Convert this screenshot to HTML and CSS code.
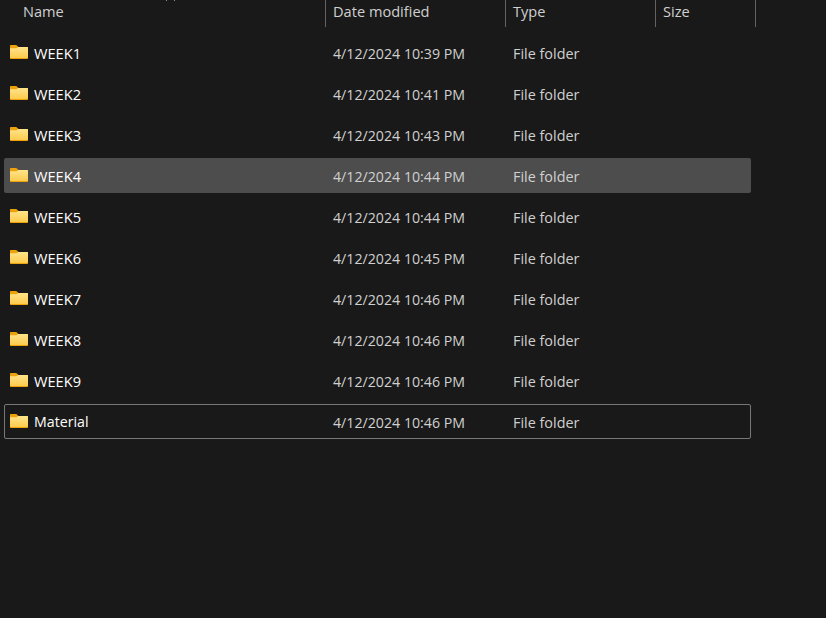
FILE: index.html
```html
<!DOCTYPE html>
<html lang="en">
<head>
<meta charset="utf-8">
<title>Folder</title>
<link rel="stylesheet" href="styles.css">
</head>
<body>
<svg class="defs" width="0" height="0" aria-hidden="true">
  <defs>
    <linearGradient id="fg" x1="0" y1="0" x2="0" y2="1">
      <stop offset="0" stop-color="#ffe48a"/>
      <stop offset="1" stop-color="#fccb4e"/>
    </linearGradient>
    <symbol id="folder" viewBox="0 0 18 14">
      <path d="M0 1C0 .4.4 0 1 0h4.8c.4 0 .7.1 1 .4L8.6 2H17c.6 0 1 .4 1 1V13c0 .6-.4 1-1 1H1c-.6 0-1-.4-1-1Z" fill="#eda20c"/>
      <path d="M0 3.3h6.4L8.3 2H17c.6 0 1 .4 1 1V12.6c0 .3-.3.5-.6.5H.6c-.3 0-.6-.2-.6-.5Z" fill="url(#fg)"/>
    </symbol>
  </defs>
</svg>
<main class="view">
  <div class="sort-mark"></div>
  <header class="head">
    <div class="hcell c-name">Name</div>
    <div class="hcell c-date">Date modified</div>
    <div class="hcell c-type">Type</div>
    <div class="hcell c-size">Size</div>
  </header>
  <ul class="list">
    <li class="row"><div class="c-name name"><svg class="ico"><use href="#folder"/></svg><span class="wk">WEEK1</span></div><div class="c-date">4/12/2024 10:39 PM</div><div class="c-type">File folder</div></li>
    <li class="row"><div class="c-name name"><svg class="ico"><use href="#folder"/></svg><span class="wk">WEEK2</span></div><div class="c-date">4/12/2024 10:41 PM</div><div class="c-type">File folder</div></li>
    <li class="row"><div class="c-name name"><svg class="ico"><use href="#folder"/></svg><span class="wk">WEEK3</span></div><div class="c-date">4/12/2024 10:43 PM</div><div class="c-type">File folder</div></li>
    <li class="row selected"><div class="c-name name"><svg class="ico"><use href="#folder"/></svg><span class="wk">WEEK4</span></div><div class="c-date">4/12/2024 10:44 PM</div><div class="c-type">File folder</div></li>
    <li class="row"><div class="c-name name"><svg class="ico"><use href="#folder"/></svg><span class="wk">WEEK5</span></div><div class="c-date">4/12/2024 10:44 PM</div><div class="c-type">File folder</div></li>
    <li class="row"><div class="c-name name"><svg class="ico"><use href="#folder"/></svg><span class="wk">WEEK6</span></div><div class="c-date">4/12/2024 10:45 PM</div><div class="c-type">File folder</div></li>
    <li class="row"><div class="c-name name"><svg class="ico"><use href="#folder"/></svg><span class="wk">WEEK7</span></div><div class="c-date">4/12/2024 10:46 PM</div><div class="c-type">File folder</div></li>
    <li class="row"><div class="c-name name"><svg class="ico"><use href="#folder"/></svg><span class="wk">WEEK8</span></div><div class="c-date">4/12/2024 10:46 PM</div><div class="c-type">File folder</div></li>
    <li class="row"><div class="c-name name"><svg class="ico"><use href="#folder"/></svg><span class="wk">WEEK9</span></div><div class="c-date">4/12/2024 10:46 PM</div><div class="c-type">File folder</div></li>
    <li class="row focused"><div class="c-name name"><svg class="ico"><use href="#folder"/></svg><span>Material</span></div><div class="c-date">4/12/2024 10:46 PM</div><div class="c-type">File folder</div></li>
  </ul>
</main>
</body>
</html>
```
FILE: styles.css
```css
html, body {
  margin: 0;
  height: 100%;
  background: #191919;
  overflow: hidden;
}
.defs { position: absolute; }
.view {
  font-family: "Open Sans", "Noto Sans", sans-serif;
  font-size: 14.2px;
  color: #fff;
  position: relative;
}
.sort-mark {
  position: absolute;
  left: 166px;
  top: 0;
  width: 7px;
  height: 1px;
  border-left: 1px solid #8a8a8a;
  border-right: 1px solid #8a8a8a;
}
.head {
  display: flex;
  height: 27px;
  color: #d0d0d0;
  font-size: 14.6px;
}
.hcell {
  box-sizing: border-box;
  border-right: 1px solid #636363;
  line-height: 22px;
  padding-left: 7px;
  padding-bottom: 3px;
}
.head .c-name { width: 326px; padding-left: 23px; }
.head .c-date { width: 180px; }
.head .c-type { width: 150px; }
.head .c-size { width: 100px; }
.list {
  list-style: none;
  margin: 8px 0 0 4px;
  padding: 0;
  width: 747px;
  display: flex;
  flex-direction: column;
  gap: 6px;
}
.row {
  box-sizing: border-box;
  display: flex;
  align-items: center;
  height: 35px;
  padding-top: 2px;
  border-radius: 2px;
  border: 1px solid transparent;
  color: #d0d0d0;
  line-height: 20px;
}
.row .c-name { width: 321px; }
.row .c-date { width: 180px; padding-left: 7px; box-sizing: border-box; }
.row .c-type { padding-left: 7px; font-size: 14.4px; }
.name {
  display: flex;
  align-items: center;
  gap: 6px;
  padding-left: 5px;
  padding-bottom: 2px;
  box-sizing: border-box;
  color: #fff;
}
.wk { font-size: 14.6px; }
.ico {
  width: 18px;
  height: 14px;
  position: relative;
  top: -1px;
}
.selected { background: #4d4d4d; }
.focused { border-color: #777; }
```
